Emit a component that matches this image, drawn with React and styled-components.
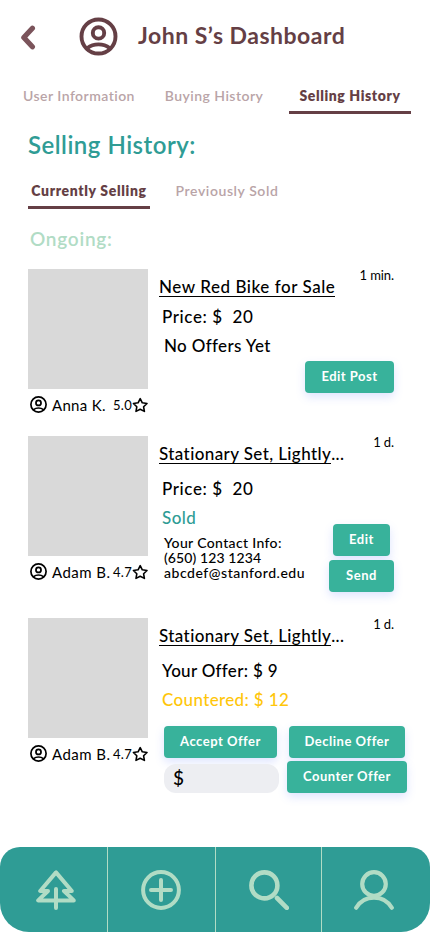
import React from "react";
import styled, { createGlobalStyle, css } from "styled-components";

const color = {
  plum: "#653f45",
  plumSoft: "#7b545b",
  plumFaded: "#b9a4a7",
  teal: "#2f9c95",
  button: "#38b29b",
  mint: "#b1dcc5",
  yellow: "#ffc60a",
};

const GlobalStyle = createGlobalStyle`
  * { box-sizing: border-box; }
  body { margin: 0; background: #fff; color: #000; }
  body, button, input { font-family: Lato, "Open Sans", sans-serif; }
`;

const Page = styled.div`
  width: 430px;
  height: 932px;
  display: flex;
  flex-direction: column;
  overflow: hidden;
  background: #fff;
`;

const Header = styled.header`
  display: flex;
  align-items: center;
  height: 73px;
  padding-left: 20px;
`;

const BackButton = styled.button`
  display: flex;
  width: 16px;
  margin: 1px 43px 0 0;
  padding: 0;
  border: 0;
  background: none;
`;

const PageTitle = styled.h1`
  margin: 0 0 3px 20px;
  font-size: 23px;
  line-height: 30px;
  font-weight: 700;
  letter-spacing: 0.5px;
  color: ${color.plum};
`;

const Tabs = styled.nav`
  display: flex;
  margin: ${(p) => (p.$sub ? "16px 0 0 28px" : "8px 0 0 18px")};
`;

const Tab = styled.button`
  width: 122px;
  height: 33px;
  margin: 0 0 0 ${(p) => p.$gap || 0}px;
  padding: 0;
  border: 0;
  border-bottom: 3px solid transparent;
  background: none;
  font-size: 14px;
  line-height: 30px;
  font-weight: 600;
  letter-spacing: ${(p) => p.$tracking}px;
  white-space: nowrap;
  color: ${color.plumFaded};
  ${(p) =>
    p.$active &&
    css`
      font-weight: 800;
      color: ${color.plum};
      border-bottom-color: ${color.plum};
    `}
`;

const SectionTitle = styled.h2`
  margin: 16px 0 0 28px;
  font-size: 24px;
  line-height: 30px;
  font-weight: 600;
  letter-spacing: 0.5px;
  color: ${color.teal};
`;

const GroupTitle = styled.h3`
  margin: 18px 0 0 30px;
  font-size: 19px;
  line-height: 24px;
  font-weight: 600;
  letter-spacing: 0.75px;
  color: ${color.mint};
`;

const Listings = styled.main`
  display: flex;
  flex-direction: column;
  padding: 18px 23px 0 28px;
`;

const Card = styled.article`
  display: flex;
  gap: 11px;
  height: ${(p) => p.$height}px;
`;

const Media = styled.div`
  width: 120px;
  flex: none;
`;

const Thumbnail = styled.div`
  height: 120px;
  background: #d9d9d9;
`;

const Seller = styled.div`
  display: flex;
  align-items: center;
  height: 31px;
  padding-left: 2px;
`;

const SellerName = styled.span`
  margin: 0 auto 0 5px;
  font-size: 15px;
  line-height: 20px;
  letter-spacing: ${(p) => p.$tracking}px;
  white-space: nowrap;
`;

const Rating = styled.span`
  margin: 0;
  font-size: 13px;
  line-height: 20px;
  letter-spacing: 0.3px;
`;

const Details = styled.div`
  flex: 1;
  display: flex;
  flex-direction: column;
`;

const TopLine = styled.div`
  display: flex;
  justify-content: space-between;
  align-items: flex-start;
  padding-right: 13px;
`;

const ItemTitle = styled.h4`
  display: flex;
  margin: 7px 0 0;
  font-size: 17px;
  line-height: 21px;
  font-weight: 500;
  letter-spacing: ${(p) => p.$tracking}px;
  white-space: nowrap;
`;

const Underlined = styled.span`
  border-bottom: 1px solid #000;
  height: 21px;
`;

const Age = styled.time`
  font-size: 13px;
  line-height: 13px;
  letter-spacing: -0.1px;
`;

const Line = styled.p`
  margin: ${(p) => p.$top || 8}px 0 0 ${(p) => p.$indent || 3}px;
  font-size: 17px;
  line-height: 21px;
  font-weight: 500;
  letter-spacing: ${(p) => p.$tracking ?? 0.45}px;
  color: ${(p) => p.$color || "#000"};
  white-space: pre;
`;

const Actions = styled.div`
  display: flex;
  justify-content: space-between;
  align-items: flex-start;
  padding: ${(p) => p.$pad};
`;

const SaleStatus = styled.div`
  display: flex;
  flex-direction: column;
`;

const Contact = styled.address`
  margin: 7px 0 0 5px;
  font-size: 14px;
  line-height: 15px;
  font-style: normal;
  font-weight: 500;
`;

const ContactLine = styled.div`
  height: 15px;
  letter-spacing: ${(p) => p.$tracking}px;
`;

const ButtonStack = styled.div`
  display: flex;
  flex-direction: column;
  align-items: center;
  gap: ${(p) => p.$gap}px;
  margin-top: ${(p) => p.$top || 0}px;
`;

const Button = styled.button`
  width: ${(p) => p.$width}px;
  height: 32px;
  padding: 0 0 2px;
  border: 0;
  border-radius: 4px;
  background: ${color.button};
  box-shadow: 0 4px 10px rgba(88, 120, 255, 0.2);
  color: #fff;
  font-size: 13px;
  font-weight: 700;
  letter-spacing: 0.5px;
  white-space: nowrap;
`;

const OfferColumn = styled.div`
  display: flex;
  flex-direction: column;
  gap: 6px;
`;

const OfferField = styled.label`
  display: flex;
  align-items: center;
  width: 115px;
  height: 29px;
  padding: 0 9px 2px;
  border-radius: 12px;
  background: #edeef2;
  font-size: 19px;
  font-weight: 500;
`;

const OfferInput = styled.input`
  min-width: 0;
  flex: 1;
  border: 0;
  background: none;
  outline: 0;
  font-size: 17px;
`;

const BottomBar = styled.nav`
  display: grid;
  grid-template-columns: 108px 108px 106px 108px;
  height: 85px;
  margin-top: auto;
  flex: none;
  overflow: hidden;
  border-radius: 20px 20px 29px 29px;
  background: ${color.teal};
`;

const BarItem = styled.button`
  display: flex;
  justify-content: center;
  align-items: center;
  padding: 0 ${(p) => p.$right || 0}px 0 ${(p) => p.$left || 0}px;
  border: 0;
  border-right: 1px solid ${color.mint};
  background: none;
  color: ${color.mint};
  &:last-child {
    border-right: 0;
  }
`;

const Icon = styled.svg`
  display: block;
  flex: none;
  fill: none;
  stroke: currentColor;
  stroke-linecap: round;
  stroke-linejoin: round;
`;

const HeaderIcon = styled(Icon)`
  color: ${color.plum};
`;

const BackIcon = styled(Icon)`
  color: ${color.plumSoft};
`;

const ProfileShape = () => (
  <>
    <circle cx="19" cy="19" r="17" />
    <circle cx="19" cy="15.4" r="5.7" />
    <path d="M8 30.6C14 25.6 24 25.6 30 30.6" />
  </>
);

const SellerRow = ({ name, rating, tracking }) => (
  <Seller>
    <Icon width="17" height="17" viewBox="0 0 38 38" strokeWidth="3.8">
      <ProfileShape />
    </Icon>
    <SellerName $tracking={tracking}>{name}</SellerName>
    <Rating>{rating}</Rating>
    <Icon width="16" height="16" viewBox="0 0 16 16" strokeWidth="1.6">
      <path d="M8.2 1.6 10.3 5.8 15 6.5 11.6 9.8 12.4 14.4 8.2 12.3 4 14.4 4.8 9.8 1.4 6.5 6.1 5.8Z" />
    </Icon>
  </Seller>
);

const Listing = ({ title, more, tracking, age, seller, height, children }) => (
  <Card $height={height}>
    <Media>
      <Thumbnail />
      <SellerRow {...seller} />
    </Media>
    <Details>
      <TopLine>
        <ItemTitle $tracking={tracking}>
          <Underlined>{title}</Underlined>
          {more}
        </ItemTitle>
        <Age>{age}</Age>
      </TopLine>
      {children}
    </Details>
  </Card>
);

const anna = { name: "Anna K.", rating: "5.0", tracking: 0.3 };
const adam = { name: "Adam B.", rating: "4.7", tracking: 0.45 };

export default function App() {
  return (
    <Page>
      <GlobalStyle />
      <Header>
        <BackButton aria-label="Back">
          <BackIcon width="16" height="25" viewBox="0 0 16 25" strokeWidth="5.2">
            <path d="M12.4 3.2 3.8 12.5 12.4 21.8" />
          </BackIcon>
        </BackButton>
        <HeaderIcon width="39" height="39" viewBox="-0.5 -0.5 39 39" strokeWidth="3.9">
          <ProfileShape />
        </HeaderIcon>
        <PageTitle>John S’s Dashboard</PageTitle>
      </Header>

      <Tabs>
        <Tab $tracking={0.46}>User Information</Tab>
        <Tab $tracking={0.47} $gap={13}>Buying History</Tab>
        <Tab $tracking={0.6} $gap={14} $active>Selling History</Tab>
      </Tabs>

      <SectionTitle>Selling History:</SectionTitle>

      <Tabs $sub>
        <Tab $tracking={0.66} $active>Currently Selling</Tab>
        <Tab $tracking={0.58} $gap={16}>Previously Sold</Tab>
      </Tabs>

      <GroupTitle>Ongoing:</GroupTitle>

      <Listings>
        <Listing title="New Red Bike for Sale" tracking={0.55} age="1 min." seller={anna} height={167}>
          <Line $top={9} $tracking={0.6}>{"Price: $  20"}</Line>
          <Line $indent={5} $tracking={0.35}>No Offers Yet</Line>
          <Actions $pad="5px 13px 0 146px">
            <Button $width={89}>Edit Post</Button>
          </Actions>
        </Listing>

        <Listing title="Stationary Set, Lightly" more="..." tracking={0.4} age="1 d." seller={adam} height={182}>
          <Line $top={14} $tracking={0.6}>{"Price: $  20"}</Line>
          <Actions $pad="0 13px 0 0">
            <SaleStatus>
              <Line $color={color.teal}>Sold</Line>
              <Contact>
                <ContactLine $tracking={0.35}>Your Contact Info:</ContactLine>
                <ContactLine $tracking={0.1}>(650) 123 1234</ContactLine>
                <ContactLine $tracking={0.53}>abcdef@stanford.edu</ContactLine>
              </Contact>
            </SaleStatus>
            <ButtonStack $gap={4} $top={25}>
              <Button $width={57}>Edit</Button>
              <Button $width={65}>Send</Button>
            </ButtonStack>
          </Actions>
        </Listing>

        <Listing title="Stationary Set, Lightly" more="..." tracking={0.4} age="1 d." seller={adam} height={182}>
          <Line $top={14} $tracking={0.3}>Your Offer: $ 9</Line>
          <Line $tracking={0.36} $color={color.yellow}>Countered: $ 12</Line>
          <Actions $pad="16px 0 0 5px">
            <OfferColumn>
              <Button $width={113}>Accept Offer</Button>
              <OfferField>
                $
                <OfferInput aria-label="Counter amount" />
              </OfferField>
            </OfferColumn>
            <ButtonStack $gap={3}>
              <Button $width={116}>Decline Offer</Button>
              <Button $width={120}>Counter Offer</Button>
            </ButtonStack>
          </Actions>
        </Listing>
      </Listings>

      <BottomBar>
        <BarItem aria-label="Home" $left={5}>
          <Icon width="40" height="40" viewBox="0 0 40 40" strokeWidth="4">
            <path d="M20 2.4 4.2 21H12L2.2 30.4H37.8L28 21H35.8ZM20 19V38" />
          </Icon>
        </BarItem>
        <BarItem aria-label="Add" $right={1}>
          <Icon width="40" height="40" viewBox="0 0 40 40" strokeWidth="4">
            <circle cx="20" cy="20" r="17.9" />
            <path d="M10 20H30M20 10V30" />
          </Icon>
        </BarItem>
        <BarItem aria-label="Search" $left={1}>
          <Icon width="40" height="40" viewBox="0 0 40 40" strokeWidth="4.6">
            <circle cx="15.4" cy="15.4" r="13" />
            <path d="M28 28 37.8 37.8" />
          </Icon>
        </BarItem>
        <BarItem aria-label="Profile" $right={4}>
          <Icon width="40" height="40" viewBox="0 0 40 40" strokeWidth="4.2">
            <circle cx="20" cy="14" r="11.8" />
            <path d="M2.2 37.8A20.7 20.7 0 0 1 37.8 37.8" />
          </Icon>
        </BarItem>
      </BottomBar>
    </Page>
  );
}
